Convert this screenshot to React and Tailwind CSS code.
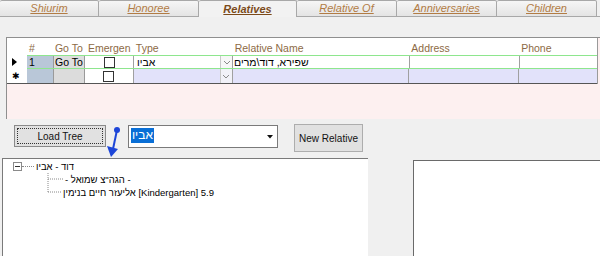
import React from 'react';

const tabs = [
    { label: 'Shiurim', w: 'w-[99px]' },
    { label: 'Honoree', w: 'w-[100px]' },
    { label: 'Relatives', w: 'w-[98px]', active: true },
    { label: 'Relative Of', w: 'w-[100px]' },
    { label: 'Anniversaries', w: 'w-[100px]' },
    { label: 'Children', w: 'w-[100px]' },
];

function Chevron() {
    return (
        <svg width="8" height="5" viewBox="0 0 8 5" className="block">
            <path d="M1 1 L4 4 L7 1" fill="none" stroke="#8a8a8a" strokeWidth="1" />
        </svg>
    );
}

function Check() {
    return <div className="w-[11px] h-[11px] border border-[#333] bg-white"></div>;
}

export default function App() {
    return (
        <div className="relative w-[600px] h-[256px] overflow-hidden bg-[#f0f0f0] font-['Liberation_Sans',Arial,sans-serif]">
            {/* Tab strip */}
            <div className="flex h-[17px]">
                {tabs.map((t) => (
                    <div
                        key={t.label}
                        className={`${t.w} flex items-center justify-center border-t border-r border-[#a8a8a8] rounded-t-[2px] text-[11px] italic underline ${t.active ? 'bg-[#f2f2f2] border-b-0 font-bold text-[#7b4a1a]' : 'bg-gradient-to-b from-[#f6f6f6] to-[#e4e4e4] border-b text-[#b27c45]'}`}
                    >
                        {t.label}
                    </div>
                ))}
                <div className="flex-1 border-b border-[#a8a8a8]"></div>
            </div>

            {/* Grid */}
            <div className="ml-[6px] mt-[20px] w-[594px] h-[82px] border-l border-t border-[#8f8f8f] bg-[#fdf0f0]">
                <div className="w-[591px] border-r border-[#9a9a9a] text-[10.5px]">
                    {/* header */}
                    <div className="flex h-[17px] bg-white text-[#8d6a45] text-[10.5px]">
                        <div className="w-[20px]"></div>
                        <div className="w-[26px] pl-[2px] pt-[3px]">#</div>
                        <div className="w-[32px] pl-[2px] pt-[3px]">Go To</div>
                        <div className="w-[49px] pl-[3px] pt-[3px]">Emergen</div>
                        <div className="w-[99px] pl-[2px] pt-[3px]">Type</div>
                        <div className="w-[177px] pl-[2px] pt-[3px]">Relative Name</div>
                        <div className="w-[110px] pl-[2px] pt-[3px]">Address</div>
                        <div className="w-[78px] pl-[2px] pt-[3px]">Phone</div>
                    </div>
                    {/* row 1 */}
                    <div className="flex h-[14px] bg-white text-black leading-[12px]">
                        <div className="w-[20px] flex items-center pl-[5px]">
                            <svg width="5" height="8" viewBox="0 0 5 8"><path d="M0 0 L5 4 L0 8 Z" fill="#000" /></svg>
                        </div>
                        <div className="flex flex-1 border-y border-[#8ee68e]">
                            <div className="w-[26px] bg-[#b9c7d8] pl-[2px]">1</div>
                            <div className="w-[32px] bg-[#dedede] border-x border-[#9a9a9a] pl-[1px] whitespace-nowrap overflow-hidden">Go To</div>
                            <div className="w-[49px] flex items-center justify-center border-r border-[#a0a0a0]"><Check /></div>
                            <div className="w-[99px] flex border-r border-[#a0a0a0]">
                                <div className="flex-1 pl-[3px]">אביו</div>
                                <div className="w-[12px] flex items-center justify-center border-l border-[#c8c8c8] bg-[#f7f7f7]"><Chevron /></div>
                            </div>
                            <div className="w-[177px] border-r border-[#a0a0a0] pl-[1px]">שפירא, דוד\מרים</div>
                            <div className="w-[110px] border-r border-[#a0a0a0]"></div>
                            <div className="flex-1"></div>
                        </div>
                    </div>
                    {/* new row */}
                    <div className="flex h-[15px] border-b border-[#555] bg-[#e2e2fa] leading-[12px]">
                        <div className="w-[20px] bg-white flex items-center pl-[5px] text-[9px]">✱</div>
                        <div className="w-[26px] bg-[#b9c7d8]"></div>
                        <div className="w-[32px] bg-[#dcdcdc] border-x border-[#9a9a9a]"></div>
                        <div className="w-[49px] bg-white flex items-center justify-center border-r border-[#a0a0a0]"><Check /></div>
                        <div className="w-[99px] flex border-r border-[#a0a0a0]">
                            <div className="flex-1"></div>
                            <div className="w-[12px] flex items-center justify-center border-l border-[#c8c8c8] bg-[#f1f1f8]"><Chevron /></div>
                        </div>
                        <div className="w-[177px] border-r border-[#a0a0a0]"></div>
                        <div className="w-[110px] border-r border-[#a0a0a0]"></div>
                        <div className="w-[78px]"></div>
                    </div>
                </div>
            </div>

            {/* Buttons row */}
            <div className="flex items-start mt-[5px] text-[10px] text-[#111]">
                <div className="ml-[14px] mt-[1px] w-[92px] h-[22px] border border-[#8a8a8a] bg-[#e1e1e1] p-[2px]">
                    <div className="w-full h-full border border-dotted border-[#333] flex items-center justify-center">Load Tree</div>
                </div>
                <div className="ml-[22px] mt-[1px] w-[150px] h-[23px] border border-[#7a7a7a] bg-white flex items-start pt-[2px] pl-[2px]">
                    <span className="bg-[#0a6fd6] text-white text-[12px] leading-[15px] px-[1px]">אביו</span>
                    <div className="flex-1"></div>
                    <div className="w-[14px] h-[17px] flex items-center justify-center">
                        <svg width="6" height="4" viewBox="0 0 6 4"><path d="M0 0 H6 L3 3.5 Z" fill="#111" /></svg>
                    </div>
                </div>
                <div className="ml-[16px] w-[69px] h-[28px] border border-[#adadad] bg-[#e1e1e1] flex items-center justify-center">New Relative</div>
            </div>

            {/* Panels */}
            <div className="flex items-start mt-[6px]">
                <div className="ml-[2px] w-[366px] h-[110px] border-l border-t border-[#7a7a7a] bg-white text-[9.5px] leading-[13px] text-black">
                    <div className="flex items-center h-[13px] mt-[1px] pl-[10px]">
                        <div className="w-[9px] h-[9px] border border-[#8a8a8a] flex items-center justify-center">
                            <div className="w-[5px] h-px bg-[#333]"></div>
                        </div>
                        <div className="w-[12px] border-t border-dotted border-[#888]"></div>
                        <div className="pl-[2px]">דוד - אביו</div>
                    </div>
                    <div className="flex pl-[44px]">
                        <svg width="18" height="26" viewBox="0 0 18 26" className="block">
                            <path d="M1 0 V19 M1 6 H17 M1 19 H15" fill="none" stroke="#888" strokeWidth="1" strokeDasharray="1 1" />
                        </svg>
                        <div className="flex flex-col">
                            <div className="h-[13px]">- הגה"צ שמואל -</div>
                            <div className="h-[13px] -ml-[2px]">אליעזר חיים בנימין [Kindergarten] 5.9</div>
                        </div>
                    </div>
                </div>
                <div className="ml-[45px] mt-[2px] flex-1 h-[110px] border-l border-t border-[#6a6a6a] bg-white"></div>
            </div>

            {/* annotation arrow */}
            <svg className="absolute left-[104px] top-[124px]" width="20" height="36" viewBox="0 0 20 36">
                <circle cx="13" cy="6" r="3" fill="#1d46d8" />
                <path d="M13 6 L9 25" stroke="#1d46d8" strokeWidth="2" fill="none" />
                <path d="M3 22 L14 25 L7 33 Z" fill="#1d46d8" />
            </svg>
        </div>
    );
}
